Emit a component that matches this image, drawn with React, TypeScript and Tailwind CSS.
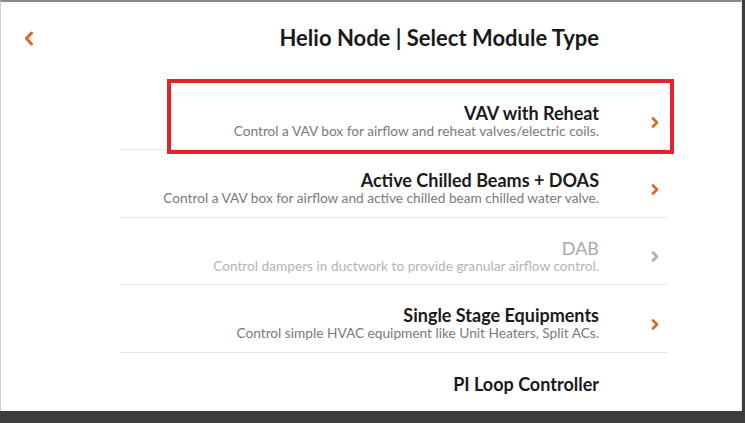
import React from "react";

const Chevron = ({ color }: { color: string }) => (
  <svg width="8" height="11" viewBox="0 0 8 11" fill="none">
    <polyline points="2,1.5 6,5.5 2,9.5" stroke={color} strokeWidth="2.6" strokeLinecap="round" strokeLinejoin="round" />
  </svg>
);

const items = [
  { t: "VAV with Reheat", d: "Control a VAV box for airflow and reheat valves/electric coils.", dis: false },
  { t: "Active Chilled Beams + DOAS", d: "Control a VAV box for airflow and active chilled beam chilled water valve.", dis: false },
  { t: "DAB", d: "Control dampers in ductwork to provide granular airflow control.", dis: true },
  { t: "Single Stage Equipments", d: "Control simple HVAC equipment like Unit Heaters, Split ACs.", dis: false },
];

export default function App() {
  return (
    <div className="w-[745px] h-[423px] bg-[#3d3d3d] overflow-hidden relative" style={{ fontFamily: "Lato, 'Open Sans', sans-serif" }}>
      <div className="w-[742px] h-[411px] bg-white border-t-2 border-t-[#8a8a8a] border-l border-l-[#d0d0d0] border-r border-r-[#e8e8e8] flex flex-col overflow-hidden">
        <div className="h-[81px] flex items-start pt-[21px] relative">
          <div className="w-[120px] pl-[23px] pt-[8px]">
            <svg width="10" height="15" viewBox="0 0 10 15" fill="none">
              <polyline points="7.5,2 2.5,7.5 7.5,13" stroke="#d9662c" strokeWidth="3" strokeLinecap="round" strokeLinejoin="round" />
            </svg>
          </div>
          <div className="w-[478px] text-right text-[22px] font-bold text-[#1a1a1a] leading-[30px] whitespace-nowrap">
            Helio Node | Select Module Type
          </div>
        </div>
        <div className="ml-[119px] w-[547px] flex flex-col">
          {items.map((it, i) => (
            <div key={i} className="flex items-center border-b border-[#e6e6e6] pt-[21px] pb-[10.4px]">
              <div className="w-[479px] text-right whitespace-nowrap">
                <div className={`text-[18px] leading-[18px] ${it.dis ? "text-[#a8a8a8] font-normal" : "text-[#1a1a1a] font-bold"}`}>{it.t}</div>
                <div className={`text-[13.7px] leading-[17px] ${it.dis ? "text-[#b5b5b5]" : "text-[#7a7a7a]"}`}>{it.d}</div>
              </div>
              <div className="flex-1 flex justify-end pr-[8px] pt-[1px]">
                <Chevron color={it.dis ? "#b0b0b0" : "#d9662c"} />
              </div>
            </div>
          ))}
          <div className="pt-[22px] w-[479px] text-right text-[18px] font-bold leading-[18px] text-[#1a1a1a]">PI Loop Controller</div>
        </div>
      </div>
      <div className="absolute left-[167px] top-[79px] w-[507px] h-[75px] border-4 border-[#e8202a] pointer-events-none" />
    </div>
  );
}
